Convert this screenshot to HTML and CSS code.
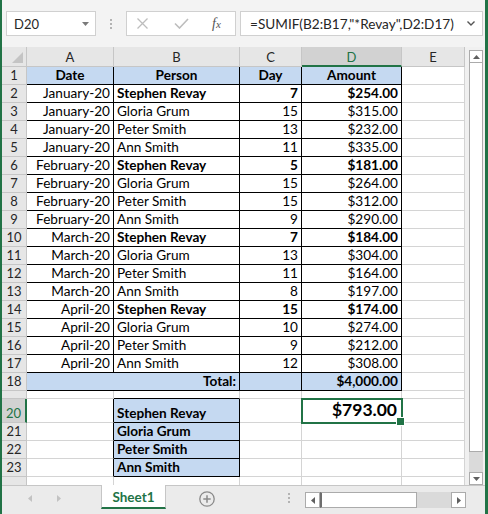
FILE: index.html
```html
<!DOCTYPE html>
<html>
<head>
<meta charset="utf-8">
<title>SUMIF</title>
<link rel="stylesheet" href="styles.css">
</head>
<body>
<div class="app">
  <div class="fbar">
    <div class="namebox"><span>D20</span><svg width="7" height="4" viewBox="0 0 7 4"><path d="M0 0h7L3.5 4z" fill="#7a7a7a"/></svg></div>
    <div class="grip"><i></i><i></i><i></i></div>
    <div class="fnbox">
      <svg class="ic-x" width="11" height="11" viewBox="0 0 11 11"><path d="M0.5 0.5l10 10M10.5 0.5l-10 10" stroke="#bdbdbd" stroke-width="1.3" fill="none"/></svg>
      <svg class="ic-ok" width="15" height="11" viewBox="0 0 15 11"><path d="M1 5.5l4.5 4.5L14 1" stroke="#bdbdbd" stroke-width="1.6" fill="none"/></svg>
      <span class="fx">f<span class="fxx">x</span></span>
    </div>
    <div class="formula"><span>=SUMIF(B2:B17,"*Revay",D2:D17)</span><svg width="8" height="5" viewBox="0 0 8 5"><path d="M0.5 0.5L4 4l3.5-3.5" stroke="#555" stroke-width="1.4" fill="none"/></svg></div>
  </div>

  <div class="main">
    <div class="sheet">
      <div class="row hdr">
        <div class="corner"><span class="tri"></span></div>
        <div class="ch">A</div><div class="ch">B</div><div class="ch">C</div><div class="ch sel">D</div><div class="ch">E</div>
      </div>
      <div class="row"><div class="rh">1</div><div class="c tb fill b ct">Date</div><div class="c tb fill b ct">Person</div><div class="c tb fill b ct">Day</div><div class="c tb fill b ct">Amount</div><div class="c"></div></div>
      <div class="row"><div class="rh">2</div><div class="c tb rt">January-20</div><div class="c tb b">Stephen Revay</div><div class="c tb rt b">7</div><div class="c tb rt b">$254.00</div><div class="c"></div></div>
      <div class="row"><div class="rh">3</div><div class="c tb rt">January-20</div><div class="c tb">Gloria Grum</div><div class="c tb rt">15</div><div class="c tb rt">$315.00</div><div class="c"></div></div>
      <div class="row"><div class="rh">4</div><div class="c tb rt">January-20</div><div class="c tb">Peter Smith</div><div class="c tb rt">13</div><div class="c tb rt">$232.00</div><div class="c"></div></div>
      <div class="row"><div class="rh">5</div><div class="c tb rt">January-20</div><div class="c tb">Ann Smith</div><div class="c tb rt">11</div><div class="c tb rt">$335.00</div><div class="c"></div></div>
      <div class="row"><div class="rh">6</div><div class="c tb rt">February-20</div><div class="c tb b">Stephen Revay</div><div class="c tb rt b">5</div><div class="c tb rt b">$181.00</div><div class="c"></div></div>
      <div class="row"><div class="rh">7</div><div class="c tb rt">February-20</div><div class="c tb">Gloria Grum</div><div class="c tb rt">15</div><div class="c tb rt">$264.00</div><div class="c"></div></div>
      <div class="row"><div class="rh">8</div><div class="c tb rt">February-20</div><div class="c tb">Peter Smith</div><div class="c tb rt">15</div><div class="c tb rt">$312.00</div><div class="c"></div></div>
      <div class="row"><div class="rh">9</div><div class="c tb rt">February-20</div><div class="c tb">Ann Smith</div><div class="c tb rt">9</div><div class="c tb rt">$290.00</div><div class="c"></div></div>
      <div class="row"><div class="rh">10</div><div class="c tb rt">March-20</div><div class="c tb b">Stephen Revay</div><div class="c tb rt b">7</div><div class="c tb rt b">$184.00</div><div class="c"></div></div>
      <div class="row"><div class="rh">11</div><div class="c tb rt">March-20</div><div class="c tb">Gloria Grum</div><div class="c tb rt">13</div><div class="c tb rt">$304.00</div><div class="c"></div></div>
      <div class="row"><div class="rh">12</div><div class="c tb rt">March-20</div><div class="c tb">Peter Smith</div><div class="c tb rt">11</div><div class="c tb rt">$164.00</div><div class="c"></div></div>
      <div class="row"><div class="rh">13</div><div class="c tb rt">March-20</div><div class="c tb">Ann Smith</div><div class="c tb rt">8</div><div class="c tb rt">$197.00</div><div class="c"></div></div>
      <div class="row"><div class="rh">14</div><div class="c tb rt">April-20</div><div class="c tb b">Stephen Revay</div><div class="c tb rt b">15</div><div class="c tb rt b">$174.00</div><div class="c"></div></div>
      <div class="row"><div class="rh">15</div><div class="c tb rt">April-20</div><div class="c tb">Gloria Grum</div><div class="c tb rt">10</div><div class="c tb rt">$274.00</div><div class="c"></div></div>
      <div class="row"><div class="rh">16</div><div class="c tb rt">April-20</div><div class="c tb">Peter Smith</div><div class="c tb rt">9</div><div class="c tb rt">$212.00</div><div class="c"></div></div>
      <div class="row"><div class="rh">17</div><div class="c tb rt">April-20</div><div class="c tb">Ann Smith</div><div class="c tb rt">12</div><div class="c tb rt">$308.00</div><div class="c"></div></div>
      <div class="row"><div class="rh">18</div><div class="c tb fill b rt span2">Total:</div><div class="c tb fill"></div><div class="c tb fill b rt">$4,000.00</div><div class="c"></div></div>
      <div class="row short"><div class="rh"></div><div class="c"></div><div class="c bb"></div><div class="c"></div><div class="c"></div><div class="c"></div></div>
      <div class="row tall"><div class="rh sel">20</div><div class="c br"></div><div class="c tb fill b">Stephen Revay</div><div class="c"></div><div class="c active b rt">$793.00</div><div class="c"></div></div>
      <div class="row"><div class="rh">21</div><div class="c br"></div><div class="c tb fill b">Gloria Grum</div><div class="c"></div><div class="c"></div><div class="c"></div></div>
      <div class="row"><div class="rh">22</div><div class="c br"></div><div class="c tb fill b">Peter Smith</div><div class="c"></div><div class="c"></div><div class="c"></div></div>
      <div class="row"><div class="rh">23</div><div class="c br"></div><div class="c tb fill b">Ann Smith</div><div class="c"></div><div class="c"></div><div class="c"></div></div>
      <div class="row"><div class="rh"></div><div class="c"></div><div class="c"></div><div class="c"></div><div class="c"></div><div class="c"></div></div>
    </div>
    <div class="vscroll">
      <div class="sbtn"><svg width="7" height="4" viewBox="0 0 7 4"><path d="M0 4h7L3.5 0z" fill="#5f5f5f"/></svg></div>
      <div class="vthumb"></div>
      <div class="vtrack"></div>
      <div class="sbtn"><svg width="7" height="4" viewBox="0 0 7 4"><path d="M0 0h7L3.5 4z" fill="#5f5f5f"/></svg></div>
    </div>
  </div>

  <div class="tabbar">
    <div class="nav"><svg width="99" height="27" viewBox="0 0 99 27"><path d="M30 9L26 12.5L30 16z" fill="#c2c2c2"/><path d="M55 9L59 12.5L55 16z" fill="#c2c2c2"/></svg></div>
    <div class="tab">Sheet1</div>
    <div class="plus"><svg width="16" height="16" viewBox="0 0 16 16"><circle cx="8" cy="8" r="7.2" stroke="#8a8a8a" stroke-width="1.3" fill="none"/><path d="M8 4.3v7.4M4.3 8h7.4" stroke="#8a8a8a" stroke-width="1.5"/></svg></div>
    <div class="dots"><i></i><i></i><i></i></div>
    <div class="hscroll">
      <div class="hbtn"><svg width="4" height="7" viewBox="0 0 4 7"><path d="M4 0v7L0 3.5z" fill="#5f5f5f"/></svg></div>
      <div class="hthumb"></div>
      <div class="htrack"></div>
      <div class="hbtn"><svg width="4" height="7" viewBox="0 0 4 7"><path d="M0 0v7L4 3.5z" fill="#5f5f5f"/></svg></div>
    </div>
  </div>
</div>
</body>
</html>
```

FILE: styles.css
```css
* { box-sizing: border-box; }
html, body { margin: 0; padding: 0; }
body {
  width: 488px;
  height: 514px;
  overflow: hidden;
  background: #fff;
  font-family: Lato, "Liberation Sans", sans-serif;
  color: #000;
}

.app {
  width: 488px;
  height: 514px;
  border-left: 2px solid #217346;
  border-right: 3px solid #217346;
  background: #f3f3f3;
  display: flex;
  flex-direction: column;
}

/* formula bar */
.fbar {
  height: 47px;
  flex: none;
  display: flex;
  align-items: flex-start;
  padding: 11px 0 0 4px;
}
.namebox {
  width: 90px;
  height: 25px;
  background: #fff;
  border: 1px solid #d0d0d0;
  display: flex;
  align-items: center;
  justify-content: space-between;
  padding: 0 6px 0 7px;
  font-size: 13px;
  color: #262626;
}
.grip {
  width: 30px;
  height: 25px;
  display: flex;
  flex-direction: column;
  align-items: center;
  justify-content: center;
  gap: 2px;
}
.grip i, .dots i {
  display: block;
  width: 2px;
  height: 2px;
  background: #b3b3b3;
}
.fnbox {
  width: 110px;
  height: 25px;
  background: #fff;
  border: 1px solid #d0d0d0;
  display: flex;
  align-items: center;
  padding-left: 10px;
}
.ic-ok { margin-left: 26px; }
.fx {
  margin-left: 23px;
  font-family: "Liberation Serif", serif;
  font-style: italic;
  font-size: 14px;
  color: #555;
  line-height: 1;
}
.fxx { font-size: 11px; }
.formula {
  margin-left: 4px;
  width: 243px;
  height: 25px;
  background: #fff;
  border: 1px solid #d0d0d0;
  display: flex;
  align-items: center;
  justify-content: space-between;
  padding: 0 7px 0 9px;
  font-size: 13.6px;
  color: #262626;
}

/* sheet */
.main {
  height: 438px;
  flex: none;
  display: flex;
}
.sheet {
  width: 463px;
  height: 438px;
  overflow: hidden;
  background: #fff;
}
.row {
  display: grid;
  grid-template-columns: 25px 87px 126px 62px 100px 63px;
  height: 18px;
}
.row.hdr { height: 20px; }
.row.short { height: 8px; }
.row.tall { height: 24px; }

.corner {
  background: #e6e6e6;
  border-right: 1px solid #c6c6c6;
  border-bottom: 1px solid #c6c6c6;
  display: flex;
  align-items: flex-end;
  justify-content: flex-end;
  padding: 0 3px 3px 0;
}
.tri {
  width: 11px;
  height: 11px;
  background: #c4c4c4;
  clip-path: polygon(100% 0, 100% 100%, 0 100%);
}
.ch {
  background: #e6e6e6;
  border-right: 1px solid #c6c6c6;
  border-bottom: 1px solid #c6c6c6;
  display: flex;
  align-items: center;
  justify-content: center;
  padding-top: 1px;
  font-size: 13px;
  color: #262626;
}
.ch.sel {
  background: #d2d2d2;
  color: #217346;
  border-bottom: 2px solid #217346;
}
.rh {
  background: #e6e6e6;
  border-right: 1px solid #c6c6c6;
  border-bottom: 1px solid #c6c6c6;
  display: flex;
  align-items: flex-end;
  justify-content: center;
  padding-bottom: 1px;
  font-size: 13px;
  line-height: 15px;
  color: #262626;
  overflow: hidden;
}
.rh.sel {
  background: #d2d2d2;
  color: #217346;
  border-right: 2px solid #217346;
}
.c {
  border-right: 1px solid #d4d4d4;
  border-bottom: 1px solid #d4d4d4;
  display: flex;
  align-items: flex-end;
  padding: 0 3px 1px;
  font-size: 13.6px;
  line-height: 16px;
  white-space: nowrap;
  overflow: hidden;
}
.tb { border-color: #000; }
.br { border-right-color: #000; }
.bb { border-bottom-color: #000; }
.fill { background: #c5d9f1; }
.b { font-weight: 700; }
.ct { justify-content: center; }
.rt { justify-content: flex-end; }
.span2 { grid-column: span 2; }
.active {
  position: relative;
  overflow: visible;
  outline: 2px solid #217346;
  outline-offset: -1px;
  font-size: 17.5px;
  line-height: 20px;
  padding: 0 4px 2px;
}
.active::after {
  content: "";
  position: absolute;
  right: -4px;
  bottom: -4px;
  width: 7px;
  height: 7px;
  background: #217346;
  border: 1px solid #fff;
}

/* vertical scrollbar */
.vscroll {
  width: 20px;
  height: 438px;
  background: #f0f0f0;
  padding: 3px 2px 0 4px;
  display: flex;
  flex-direction: column;
}
.sbtn {
  height: 13px;
  flex: none;
  background: #fff;
  border: 1px solid #ababab;
  display: flex;
  align-items: center;
  justify-content: center;
}
.vthumb {
  height: 389px;
  flex: none;
  background: #fff;
  border: 1px solid #ababab;
  border-top: none;
}
.vtrack {
  height: 20px;
  flex: none;
  background: #dadada;
}

/* tab bar */
.tabbar {
  height: 29px;
  flex: none;
  background: #ebebeb;
  border-top: 1px solid #c6c6c6;
  display: flex;
  align-items: flex-start;
}
.nav { width: 99px; height: 27px; }
.nav svg { display: block; }
.tab {
  width: 65px;
  height: 24px;
  margin-top: -1px;
  background: #fff;
  border-left: 1px solid #c6c6c6;
  border-right: 1px solid #c6c6c6;
  border-bottom: 2px solid #217346;
  display: flex;
  align-items: center;
  justify-content: center;
  padding-top: 1px;
  font-size: 13.5px;
  font-weight: 700;
  color: #217346;
}
.plus { margin: 5px 0 0 33px; width: 16px; height: 16px; }
.plus svg { display: block; }
.dots {
  margin: 7px 0 0 72px;
  width: 3px;
  display: flex;
  flex-direction: column;
  align-items: center;
  gap: 2px;
}
.hscroll {
  margin: 6px 0 0 15px;
  width: 161px;
  height: 16px;
  display: flex;
}
.hbtn {
  width: 15px;
  height: 16px;
  flex: none;
  background: #fff;
  border: 1px solid #ababab;
  display: flex;
  align-items: center;
  justify-content: center;
}
.hthumb {
  width: 97px;
  flex: none;
  background: #fff;
  border: 1px solid #ababab;
  border-left: 2px solid #6d6d6d;
}
.htrack {
  width: 34px;
  flex: none;
  background: #dadada;
}
```
